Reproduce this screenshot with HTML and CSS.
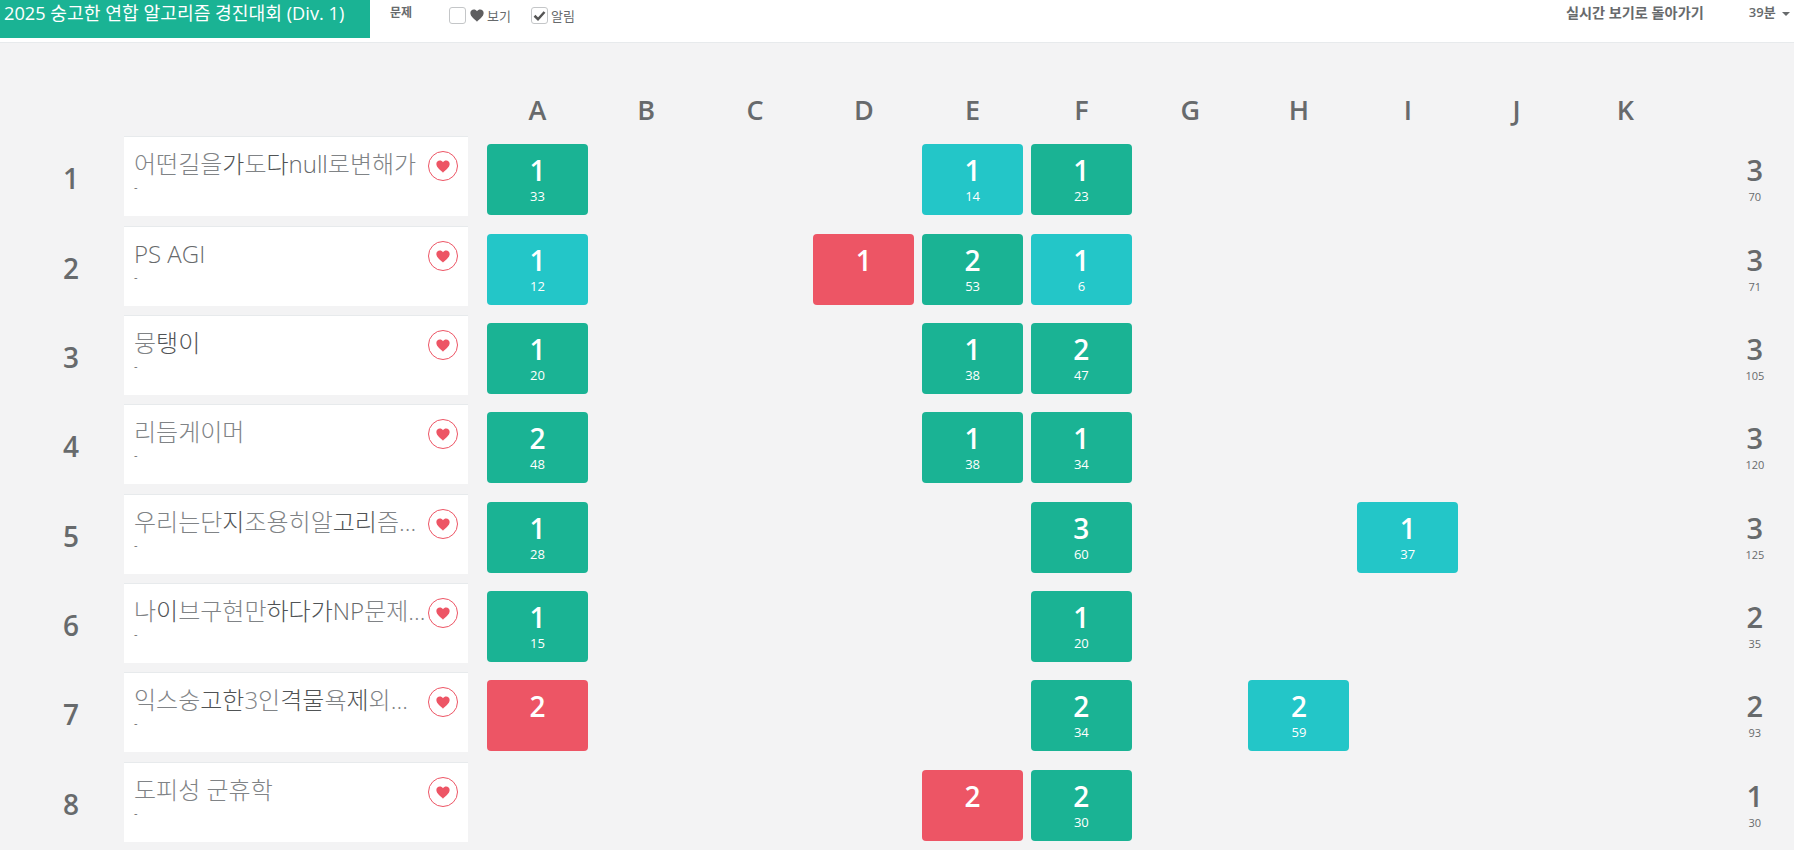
FILE: index.html
```html
<!DOCTYPE html>
<html lang="ko">
<head>
  <meta charset="UTF-8" />
  <title>2025 숭고한 연합 알고리즘 경진대회 (Div. 1)</title>
  <link rel="stylesheet" href="styles.css">
</head>
<body>
  <svg class="defs" width="0" height="0"><symbol id="heart" viewBox="0 0 24 22"><path d="M12 21.5C9 18.6 .6 13 .6 6.8.6 3.2 3.3.8 6.5.8c2.3 0 4.300 1.100 5.500 3.100C13.200 1.900 15.200.8 17.500.8c3.200 0 5.900 2.400 5.900 6 0 6.200-8.400 11.800-11.400 14.700z"/></symbol></svg>

  <header class="topbar">
    <div class="brand">2025 숭고한 연합 알고리즘 경진대회 (Div. 1)</div>
    <div class="menu-item">문제</div>
    <label class="check"><span class="box"></span><svg class="heart-sm"><use href="#heart"/></svg>보기</label>
    <label class="check check-alarm"><span class="box"><svg viewBox="0 0 12 12" class="tick"><path d="M2 6.200 4.800 9 10 3.200"/></svg></span>알림</label>
    <div class="back-link">실시간 보기로 돌아가기</div>
    <div class="time">39분 <span class="caret"></span></div>
  </header>

  <main class="board">
    <div class="row head">
      <div></div><div></div>
      <div>A</div><div>B</div><div>C</div><div>D</div><div>E</div><div>F</div><div>G</div><div>H</div><div>I</div><div>J</div><div>K</div>
      <div></div>
    </div>

    <div class="row">
      <div class="rank">1</div>
      <div class="team"><div class="name">어떤길을<b>가</b>도<b>다</b><i>null</i>로변해가</div><div class="sub">-</div><svg class="like-icon"><use href="#heart"/></svg></div>
      <div class="cell ok"><strong>1</strong><small>33</small></div><div></div><div></div><div></div>
      <div class="cell first"><strong>1</strong><small>14</small></div>
      <div class="cell ok"><strong>1</strong><small>23</small></div>
      <div></div><div></div><div></div><div></div><div></div>
      <div class="total"><strong>3</strong><small>70</small></div>
    </div>

    <div class="row">
      <div class="rank">2</div>
      <div class="team"><div class="name"><i>PS AGI</i></div><div class="sub">-</div><svg class="like-icon"><use href="#heart"/></svg></div>
      <div class="cell first"><strong>1</strong><small>12</small></div><div></div><div></div>
      <div class="cell fail"><strong>1</strong></div>
      <div class="cell ok"><strong>2</strong><small>53</small></div>
      <div class="cell first"><strong>1</strong><small>6</small></div>
      <div></div><div></div><div></div><div></div><div></div>
      <div class="total"><strong>3</strong><small>71</small></div>
    </div>

    <div class="row">
      <div class="rank">3</div>
      <div class="team"><div class="name">뭉<b>탱이</b></div><div class="sub">-</div><svg class="like-icon"><use href="#heart"/></svg></div>
      <div class="cell ok"><strong>1</strong><small>20</small></div><div></div><div></div><div></div>
      <div class="cell ok"><strong>1</strong><small>38</small></div>
      <div class="cell ok"><strong>2</strong><small>47</small></div>
      <div></div><div></div><div></div><div></div><div></div>
      <div class="total"><strong>3</strong><small>105</small></div>
    </div>

    <div class="row">
      <div class="rank">4</div>
      <div class="team"><div class="name">리듬게이머</div><div class="sub">-</div><svg class="like-icon"><use href="#heart"/></svg></div>
      <div class="cell ok"><strong>2</strong><small>48</small></div><div></div><div></div><div></div>
      <div class="cell ok"><strong>1</strong><small>38</small></div>
      <div class="cell ok"><strong>1</strong><small>34</small></div>
      <div></div><div></div><div></div><div></div><div></div>
      <div class="total"><strong>3</strong><small>120</small></div>
    </div>

    <div class="row">
      <div class="rank">5</div>
      <div class="team"><div class="name">우리는단<b>지</b>조용히알<b>고리</b>즘에서</div><div class="sub">-</div><svg class="like-icon"><use href="#heart"/></svg></div>
      <div class="cell ok"><strong>1</strong><small>28</small></div><div></div><div></div><div></div><div></div>
      <div class="cell ok"><strong>3</strong><small>60</small></div>
      <div></div><div></div>
      <div class="cell first"><strong>1</strong><small>37</small></div>
      <div></div><div></div>
      <div class="total"><strong>3</strong><small>125</small></div>
    </div>

    <div class="row">
      <div class="rank">6</div>
      <div class="team"><div class="name">나<b>이</b>브구현만<b>하다가</b><i>NP</i>문제를풀다</div><div class="sub">-</div><svg class="like-icon"><use href="#heart"/></svg></div>
      <div class="cell ok"><strong>1</strong><small>15</small></div><div></div><div></div><div></div><div></div>
      <div class="cell ok"><strong>1</strong><small>20</small></div>
      <div></div><div></div><div></div><div></div><div></div>
      <div class="total"><strong>2</strong><small>35</small></div>
    </div>

    <div class="row">
      <div class="rank">7</div>
      <div class="team"><div class="name">익스숭<b>고한</b>3인<b>격물</b>욕<b>제</b>외하고</div><div class="sub">-</div><svg class="like-icon"><use href="#heart"/></svg></div>
      <div class="cell fail"><strong>2</strong></div><div></div><div></div><div></div><div></div>
      <div class="cell ok"><strong>2</strong><small>34</small></div>
      <div></div>
      <div class="cell first"><strong>2</strong><small>59</small></div>
      <div></div><div></div><div></div>
      <div class="total"><strong>2</strong><small>93</small></div>
    </div>

    <div class="row">
      <div class="rank">8</div>
      <div class="team"><div class="name">도피성 군휴학</div><div class="sub">-</div><svg class="like-icon"><use href="#heart"/></svg></div>
      <div></div><div></div><div></div><div></div>
      <div class="cell fail"><strong>2</strong></div>
      <div class="cell ok"><strong>2</strong><small>30</small></div>
      <div></div><div></div><div></div><div></div><div></div>
      <div class="total"><strong>1</strong><small>30</small></div>
    </div>
  </main>
</body>
</html>
```

FILE: styles.css
```css
html, body {
  margin: 0;
  padding: 0;
  height: 850px;
  overflow: hidden;
}
body {
  font-family: 'Open Sans', 'Noto Sans CJK KR', sans-serif;
  background: #f3f3f4;
  color: #676a6c;
  font-size: 13px;
}
.defs {
  display: block;
  height: 0;
}
.topbar {
  display: flex;
  align-items: flex-start;
  height: 42px;
  background: #fff;
  border-bottom: 1px solid #e7eaec;
}
.brand {
  box-sizing: border-box;
  width: 370px;
  height: 38px;
  padding-left: 4px;
  background: #1ab394;
  color: #fff;
  font-size: 18.200px;
  line-height: 27px;
}
.menu-item {
  margin-left: 20px;
  font-size: 12px;
  font-weight: 700;
  line-height: 26px;
}
.check {
  display: flex;
  align-items: center;
  margin-left: 37px;
  height: 17px;
  margin-top: 7px;
  font-size: 13px;
}
.check-alarm {
  margin-left: 20px;
}
.box {
  box-sizing: border-box;
  display: block;
  width: 17px;
  height: 17px;
  margin-right: 3px;
  background: #fff;
  border: 1px solid #c4c6c8;
  border-radius: 3px;
}
.tick {
  display: block;
  width: 15px;
  height: 15px;
  fill: none;
  stroke: #555;
  stroke-width: 2;
}
.heart-sm {
  width: 14px;
  height: 13px;
  margin-left: 1px;
  margin-right: 3px;
  fill: #5e5e60;
}
.back-link {
  margin-left: auto;
  font-size: 14.200px;
  font-weight: 600;
  line-height: 25px;
}
.time {
  margin-left: 45px;
  margin-right: 4px;
  font-size: 13px;
  font-weight: 600;
  line-height: 25px;
}
.caret {
  display: inline-block;
  margin-left: 3px;
  vertical-align: middle;
  border-top: 4px solid #676a6c;
  border-left: 4px solid transparent;
  border-right: 4px solid transparent;
}

.board {
  display: flex;
  flex-direction: column;
  gap: 9.330px;
}
.row {
  display: grid;
  grid-template-columns: 124px 359px repeat(11, 108.800px) 1fr;
  grid-template-rows: 80px;
  height: 80px;
}
.row.head {
  grid-template-rows: 84px;
  height: 84px;
  line-height: 134px;
  font-size: 27px;
  font-weight: 600;
  text-align: center;
}
.rank {
  padding-left: 18px;
  text-align: center;
  font-size: 28px;
  font-weight: 600;
  line-height: 85px;
}
.team {
  position: relative;
  box-sizing: border-box;
  margin-right: 15px;
  padding: 10px 10px 0 10px;
  background: #fff;
  border-top: 1px solid #e7eaec;
}
.name {
  width: 292px;
  overflow: hidden;
  white-space: nowrap;
  text-overflow: ellipsis;
  font-size: 24px;
  font-weight: 300;
  line-height: 33px;
  color: #808386;
}
.name b {
  font-weight: 300;
  color: #505355;
}
.name i {
  font-style: normal;
  color: #676a6c;
}
.sub {
  font-size: 11px;
  line-height: 14px;
}
.team::after {
  content: "";
  position: absolute;
  top: 14px;
  right: 10px;
  box-sizing: border-box;
  width: 30px;
  height: 30px;
  border: 1px solid #ed5565;
  border-radius: 50%;
}
.like-icon {
  position: absolute;
  top: 23px;
  right: 18px;
  width: 14px;
  height: 13px;
  fill: #ed5565;
}
.cell {
  justify-self: center;
  box-sizing: border-box;
  width: 101px;
  height: 71px;
  margin-top: 8px;
  border-radius: 4px;
  color: #fff;
  text-align: center;
}
.cell strong {
  display: block;
  margin-top: 7px;
  font-size: 28px;
  font-weight: 600;
  line-height: 38px;
}
.cell small {
  display: block;
  font-size: 13px;
  line-height: 14px;
}
.ok { background: #1ab394; }
.first { background: #23c6c8; }
.fail { background: #ed5565; }
.total {
  padding-left: 36px;
  text-align: center;
}
.total strong {
  display: block;
  margin-top: 15px;
  font-size: 29px;
  font-weight: 600;
  line-height: 38px;
}
.total small {
  display: block;
  margin-top: 1px;
  font-size: 11px;
  line-height: 14px;
}
```
